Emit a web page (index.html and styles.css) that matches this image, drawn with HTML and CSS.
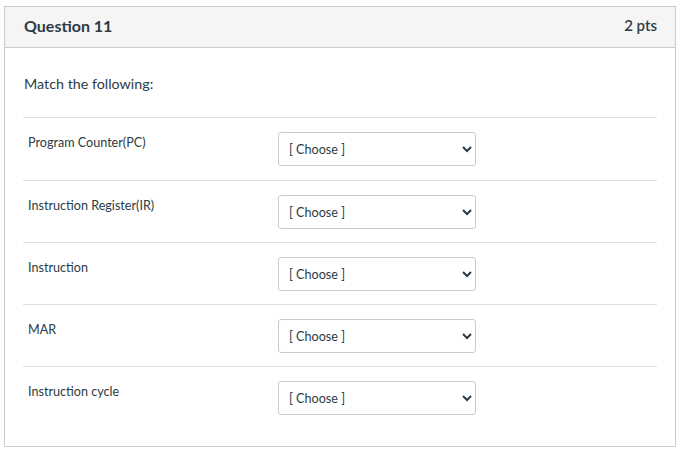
FILE: index.html
```html
<html>
    <head>
        <title>Question 11</title>
        <link rel="stylesheet" href="styles.css">
    </head>
    <body>
        <div class="question">
            <div class="question-header">
                <span class="question-title">Question 11</span>
                <span class="question-points">2 pts</span>
            </div>
            <div class="question-body">
                <p class="question-text">Match the following:</p>
                <div class="answer">
                    <div class="answer-label">Program Counter(PC)</div>
                    <select class="answer-select"><option>[ Choose ]</option></select>
                </div>
                <div class="answer">
                    <div class="answer-label">Instruction Register(IR)</div>
                    <select class="answer-select"><option>[ Choose ]</option></select>
                </div>
                <div class="answer">
                    <div class="answer-label">Instruction</div>
                    <select class="answer-select"><option>[ Choose ]</option></select>
                </div>
                <div class="answer">
                    <div class="answer-label">MAR</div>
                    <select class="answer-select"><option>[ Choose ]</option></select>
                </div>
                <div class="answer">
                    <div class="answer-label">Instruction cycle</div>
                    <select class="answer-select"><option>[ Choose ]</option></select>
                </div>
            </div>
        </div>
    </body>
</html>
```

FILE: styles.css
```css
* {
    margin: 0;
    box-sizing: border-box;
}

body {
    padding: 0;
    background-color: white;
    font-family: Lato, "Open Sans", sans-serif;
    color: #2d3b45;
}

.question {
    margin: 6px 0 0 4px;
    width: 672px;
    height: 441px;
    border: 1px solid #c7cdd1;
}

.question-header {
    display: flex;
    justify-content: space-between;
    align-items: center;
    height: 41px;
    padding: 0 18px 4px 19px;
    background-color: #f5f5f5;
    border-bottom: 1px solid #c7cdd1;
}

.question-title {
    font-size: 16px;
    font-weight: bold;
}

.question-points {
    font-size: 15px;
    font-weight: 600;
}

.question-body {
    padding: 0 18px;
}

.question-text {
    font-size: 14.3px;
    line-height: 20px;
    padding: 26px 0 23px 1px;
}

.answer {
    display: flex;
    align-items: flex-start;
    border-top: 1px solid #dde1e4;
    padding: 14px 0 13px;
}

.answer:nth-child(2) {
    padding-bottom: 14px;
}

.answer-label {
    width: 255px;
    padding: 2px 0 0 5px;
    font-size: 12.6px;
    line-height: 18px;
}

.answer-select {
    width: 198px;
    height: 34px;
    padding: 0 4px 0 6px;
    border: 1px solid #c7cdd1;
    border-radius: 3px;
    background-color: white;
    font-family: Lato, "Open Sans", sans-serif;
    font-size: 12.6px;
    color: #2d3b45;
}
```
